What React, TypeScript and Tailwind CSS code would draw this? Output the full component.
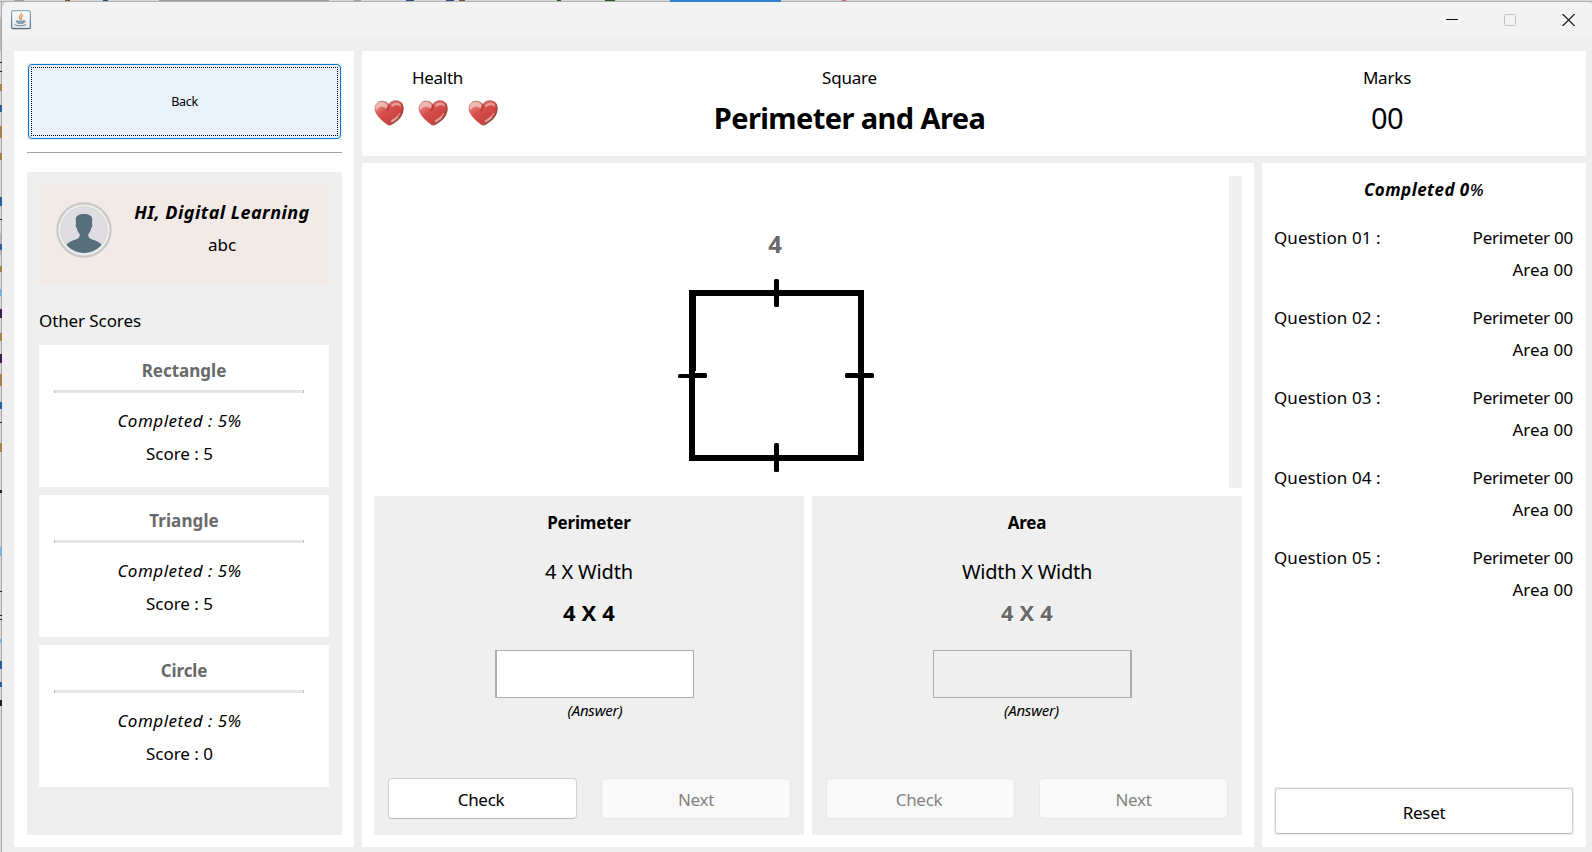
import type { ReactNode } from "react";

function cx(...parts: (string | undefined)[]) {
  return parts.filter(Boolean).join(" ");
}

/** A single line of text, centred in a row whose height the caller gives. */
function Line({ children, className }: { children: ReactNode; className?: string }) {
  return (
    <div className={cx("flex shrink-0 items-center pb-[2px] whitespace-pre leading-none", className)}>
      <span>{children}</span>
    </div>
  );
}

function JavaIcon() {
  return (
    <svg width="20" height="20" viewBox="0 0 20 20">
      <defs>
        <linearGradient id="jframe" x1="0" y1="0" x2="0" y2="1">
          <stop offset="0" stopColor="#8fa9bd" />
          <stop offset="1" stopColor="#4d6b82" />
        </linearGradient>
        <linearGradient id="jback" x1="0" y1="0" x2="0" y2="1">
          <stop offset="0" stopColor="#ffffff" />
          <stop offset="1" stopColor="#e3e6e8" />
        </linearGradient>
      </defs>
      <rect x="0.6" y="0.6" width="18.8" height="18" rx="1.6" fill="url(#jback)" stroke="url(#jframe)" strokeWidth="1.2" />
      <path d="M10.4 3.2c1 1.6-2.8 2.6-2.4 4.2.2.8 1.2 1.2 1.4 2.2M11.8 5.6c-1.6.8-2.4 1.600-1.600 2.600.5.6.3 1.200-.2 1.600" fill="none" stroke="#e2935a" strokeWidth="1.200" strokeLinecap="round" />
      <path d="M5.2 10.600c2 .8 6.200.7 8 0-.2 1.200-.6 2.200-1.400 2.800H6.800c-.8-.7-1.400-1.600-1.600-2.800z" fill="#8ba3b5" stroke="#6d889d" strokeWidth="0.700" />
      <path d="M13 10.800c2-.5 2.200 1.500-.6 2.100M4 14.800c2.200 1.500 8.400 1.300 10.600 0" fill="none" stroke="#6d889d" strokeWidth="1" strokeLinecap="round" />
    </svg>
  );
}

function Heart({ id }: { id: string }) {
  return (
    <svg width="30" height="26" viewBox="0 0 30 26" className="shrink-0">
      <defs>
        <linearGradient id={id} x1="0.1" y1="0" x2="0.9" y2="1">
          <stop offset="0" stopColor="#e3a09a" />
          <stop offset="0.4" stopColor="#d84f4c" />
          <stop offset="0.7" stopColor="#c94341" />
          <stop offset="1" stopColor="#a07060" />
        </linearGradient>
      </defs>
      <path
        d="M14.600 4.200C12.500.5 7 0 3.500 2.400.3 4.600-.2 9.200 1.600 12.700c2.400 4.600 7.200 8.400 12 12.400.8.600 2 .700 3 .1 5.400-2.700 9.900-6.200 12-11.200 1.600-4.200 1.600-9.300-1.600-12C23.200-.8 17 .1 14.600 4.200z"
        fill={`url(#${id})`}
      />
      <path d="M13.600 5C11.400 1.600 7 1.200 4 3.300 1.700 5 1.200 8.200 2.200 10.600 4.500 6.500 8 5.200 12.500 8.600z" fill="#f3cbc6" opacity="0.75" />
      <path d="M17 5.400c2.200-3 6.200-3.800 8.600-2 1.200.9 1.700 2.400 1.500 3.700-2.600-2.500-5.500-2.500-9-.1z" fill="#eebdb6" opacity="0.7" />
      <path d="M3.800 2.200C7 .3 12 .8 14.600 4.200 17 .4 22.500-.5 26.200 1.700" fill="none" stroke="#a08a72" strokeWidth="0.900" opacity="0.7" />
      <path d="M27.800 4c1.200 3.400 1 7.700-.6 10.400-2 4.300-6.300 7.500-11 9.900" fill="none" stroke="#85503f" strokeWidth="1.500" opacity="0.600" />
      <path d="M14.700 4.400c.8 2.700 0 4.600-2.200 6.400" fill="none" stroke="#a32a2c" strokeWidth="1.400" opacity="0.700" />
      <path d="M25.800 13.200c-2 3.400-5 5.700-8.800 7.700M24 16.800c-2 2.400-4.300 4-6.600 5.300" fill="none" stroke="#eab3aa" strokeWidth="1.100" opacity="0.850" />
    </svg>
  );
}

function Avatar() {
  return (
    <svg width="56" height="58" viewBox="0 0 56 58" className="shrink-0">
      <defs>
        <clipPath id="face">
          <circle cx="28" cy="29" r="23" />
        </clipPath>
      </defs>
      <circle cx="28" cy="29" r="26.600" fill="#ececea" stroke="#c8c8c6" strokeWidth="2.200" />
      <circle cx="28" cy="29" r="23" fill="#dfdde1" stroke="#cfcfcf" strokeWidth="0.800" />
      <g clipPath="url(#face)" fill="#576f7b">
        <path d="M19.800 17.800c0-3 3.400-4.800 8.200-4.800s8.200 1.800 8.200 4.800c.1 1.800 0 3.500-.3 5.200.8.300.5 3.200-.7 4-.5 2.800-1.600 4.800-3 6.200.2 2.500.6 3.800 2.800 4.900 4.600 1.600 8.900 3 11.300 6.400-2.400 4.800-9.600 7.600-18.300 7.600S11.400 49 9.700 44.500c2.400-3.400 6.700-4.800 11.300-6.400 2.200-1.100 2.600-2.400 2.800-4.900-1.400-1.400-2.500-3.400-3-6.200-1.200-.8-1.500-3.700-.7-4-.3-1.700-.4-3.400-.3-5.200z" />
      </g>
    </svg>
  );
}

function SquareFigure() {
  return (
    <svg width="196" height="193" viewBox="0 0 196 193" className="shrink-0">
      <path d="M11 11h175v171H11zM17 17v159h163V17z" fill="#000" fillRule="evenodd" shapeRendering="crispEdges" />
      <path d="M17 17h1v75h-1z" fill="#000" shapeRendering="crispEdges" />
      <g fill="#000">
        <rect x="96" y="0" width="5" height="28" rx="1.500" />
        <rect x="96" y="164" width="5" height="29" rx="1.500" />
        <rect x="0" y="95" width="17" height="4" rx="1.500" />
        <rect x="12" y="94" width="17" height="5" rx="1.500" />
        <rect x="167" y="94" width="29" height="5" rx="1.500" />
      </g>
    </svg>
  );
}

function ScoreCard({ name, nameClass, score }: { name: string; nameClass: string; score: number }) {
  return (
    <section className="flex h-[142px] shrink-0 flex-col bg-white pt-[14px]">
      <Line className={cx("h-6 justify-center text-[17px] font-bold text-[#696969]", nameClass)}>{name}</Line>
      <div className="mt-[7px] ml-[15px] h-[3px] w-[250px] shrink-0 border-x border-[#bcbcbc] bg-[#e6e6e6]" />
      <div className="mt-4 w-[281px] text-[17px]">
        <Line className="h-6 justify-center italic tracking-[0.5px]">Completed : 5%</Line>
        <Line className="mt-[9px] h-6 justify-center">{`Score : ${score}`}</Line>
      </div>
    </section>
  );
}

function PushButton({ label, disabled, className }: { label: string; disabled?: boolean; className?: string }) {
  return (
    <button
      disabled={disabled}
      className={cx(
        "flex items-center justify-center rounded-[4px] border pt-[2px] text-[17px] leading-none tracking-[-0.3px]",
        disabled
          ? "border-[#e7e7e7] bg-[#f9f9f9] text-[#838383]"
          : "border-[#d0d0d0] border-b-[#b8b8b8] bg-[#fdfdfd] text-black",
        className
      )}
    >
      <span>{label}</span>
    </button>
  );
}

function AnswerPanel({
  title,
  formula,
  formulaClass,
  active,
}: {
  title: string;
  formula: string;
  formulaClass: string;
  active: boolean;
}) {
  return (
    <section className="flex w-[430px] shrink-0 flex-col bg-[#efefef] pt-[15px]">
      <Line className="h-6 justify-center text-[17px] font-bold tracking-[-0.2px]">{title}</Line>
      <Line className={cx("mt-[24px] h-[26px] justify-center pt-[2px] text-[20px]", formulaClass)}>{formula}</Line>
      <Line
        className={cx(
          "mt-[14px] h-7 justify-center text-[22px] font-bold tracking-[0.1px]",
          active ? "text-black" : "text-[#696969] [text-shadow:1px_1px_0_#fff]"
        )}
      >
        4 X 4
      </Line>
      <input
        disabled={!active}
        className={cx(
          "mt-[23px] ml-[121px] h-12 w-[199px] shrink-0 border border-[#abadb3] outline-none",
          active ? "border-l-2 bg-white" : "border-r-2 bg-[#efefef]"
        )}
      />
      <Line
        className={cx(
          "mt-[3px] h-5 justify-center text-[15px] italic tracking-[-0.2px]",
          active ? "pl-[12px]" : "pl-[9px]"
        )}
      >
        (Answer)
      </Line>
      <div className="mt-[57px] flex gap-6 pl-[14px]">
        <PushButton label="Check" disabled={!active} className="h-[41px] w-[189px] pr-[3px]" />
        <PushButton label="Next" disabled className={cx("h-[41px]", active ? "w-[190px]" : "w-[189px]")} />
      </div>
    </section>
  );
}

function Sidebar() {
  return (
    <aside className="flex w-[340px] shrink-0 flex-col bg-white px-[12px] pt-[12px] pl-[13px]">
      <div className="h-[77px] shrink-0 bg-[#efefef] p-px">
        <button className="flex h-full w-full rounded-[4px] border border-[#0078d4] bg-[#e9f1fa] p-[2px]">
          <span className="flex h-full w-full items-center justify-center border border-dotted border-black pt-[2px] text-[12.5px] leading-none tracking-[-0.3px]">
            Back
          </span>
        </button>
      </div>
      <div className="mt-[12px] h-px shrink-0 bg-[#a0a0a0]" />
      <div className="mt-[19px] flex h-[663px] shrink-0 flex-col bg-[#efefef] px-[13px] pt-[13px] pl-[12px]">
        <div className="flex h-[100px] shrink-0 bg-[#f2eae6] pt-[16px] pl-[17px]">
          <Avatar />
          <div className="ml-[10px] flex w-[200px] flex-col">
            <Line className="h-6 justify-center text-[18px] font-bold italic tracking-[0.45px]">HI, Digital Learning</Line>
            <Line className="mt-[8px] h-6 justify-center text-[17px]">abc</Line>
          </div>
        </div>
        <Line className="mt-6 h-6 text-[17px] tracking-[-0.1px]">Other Scores</Line>
        <div className="mt-[12px] flex flex-col gap-2">
          <ScoreCard name="Rectangle" nameClass="tracking-[0px]" score={5} />
          <ScoreCard name="Triangle" nameClass="tracking-[0.1px]" score={5} />
          <ScoreCard name="Circle" nameClass="tracking-[-0.1px]" score={0} />
        </div>
      </div>
    </aside>
  );
}

function Header() {
  return (
    <header className="flex h-[105px] shrink-0 bg-white pt-[15px] pl-[12px]">
      <div className="w-[127px]">
        <Line className="h-6 justify-center text-[17px] tracking-[-0.3px]">Health</Line>
        <div className="mt-[10px] flex">
          <Heart id="heart-a" />
          <div className="ml-[14px]">
            <Heart id="heart-b" />
          </div>
          <div className="ml-5">
            <Heart id="heart-c" />
          </div>
        </div>
      </div>
      <div className="w-[697px]">
        <Line className="h-6 justify-center text-[17px] tracking-[-0.2px]">Square</Line>
        <Line className="mt-[10px] h-9 justify-center text-[29px] font-bold tracking-[-0.6px]">Perimeter and Area</Line>
      </div>
      <div className="w-[378px]">
        <Line className="h-6 justify-center text-[17px] tracking-[-0.2px]">Marks</Line>
        <Line className="mt-[10px] h-9 justify-center text-[29px] tracking-[-0.6px]">00</Line>
      </div>
    </header>
  );
}

function Workspace() {
  return (
    <main className="flex w-[892px] shrink-0 flex-col bg-white pt-[13px] pl-[12px]">
      <div className="flex h-[312px] shrink-0">
        <div className="w-[855px]">
          <Line className="mt-[57px] ml-[301px] h-6 w-[200px] justify-center text-[24px] font-bold text-[#696969]">4</Line>
          <div className="mt-[22px] ml-[304px]">
            <SquareFigure />
          </div>
        </div>
        <div className="w-[13px] bg-[#efefef]" />
      </div>
      <div className="mt-2 flex h-[339px] gap-2">
        <AnswerPanel title="Perimeter" formula="4 X Width" formulaClass="tracking-[-0.15px]" active />
        <AnswerPanel title="Area" formula="Width X Width" formulaClass="tracking-[-0.25px]" active={false} />
      </div>
    </main>
  );
}

function Results() {
  return (
    <aside className="flex w-[324px] shrink-0 flex-col bg-white px-[12px] pt-[15px]">
      <Line className="h-6 justify-center text-[17px] font-bold italic tracking-[0.45px]">
        Completed 0<span className="font-medium">%</span>
      </Line>
      <div className="mt-6 flex flex-col gap-6 text-[17px]">
        {["01", "02", "03", "04", "05"].map((n) => (
          <div key={n} className="flex flex-col gap-2 pr-px">
            <div className="flex justify-between">
              <Line className="h-6 tracking-[0.07px]">{`Question ${n} :`}</Line>
              <Line className="h-6 tracking-[-0.25px]">Perimeter 00</Line>
            </div>
            <Line className="h-6 justify-end">Area 00</Line>
          </div>
        ))}
      </div>
      <div className="mt-auto mb-[12px] flex h-12 bg-[#efefef] p-px">
        <PushButton label="Reset" className="w-full" />
      </div>
    </aside>
  );
}

function TitleBar() {
  return (
    <div className="flex h-[37px] shrink-0 justify-between bg-[#f3f3f3] pr-[17px] pl-[9px]">
      <div className="pt-[8px]">
        <JavaIcon />
      </div>
      <div className="flex gap-[46px] pt-[12px]">
        <svg width="12" height="12" viewBox="0 0 12 12">
          <path d="M0 5.500h12" stroke="#111" shapeRendering="crispEdges" />
        </svg>
        <svg width="12" height="12" viewBox="0 0 12 12">
          <rect x="0.500" y="0.500" width="11" height="11" rx="1" fill="none" stroke="#c3c3c3" />
        </svg>
        <svg width="13" height="12" viewBox="0 0 13 12">
          <path d="M.6 0l12 12M12.600 0L.6 12" stroke="#1a1a1a" strokeWidth="1.200" />
        </svg>
      </div>
    </div>
  );
}

/** Sliver of the desktop that stays visible along the left edge. */
function DesktopEdge() {
  return (
    <svg width="2" height="850" viewBox="0 0 2 850" className="shrink-0" shapeRendering="crispEdges">
      <path d="M0 0h1v850H0z" fill="#dadada" />
      <path d="M1 0h1v850H1z" fill="#a9a9a9" />
      <path d="M0 15h1v34H0zM0 231h1v22H0z" fill="#b8b8b8" />
      <path d="M0 60h2v1H0zM0 69h2v1H0zM0 217h2v1H0zM0 420h2v1H0zM0 488h2v3H0zM0 589h2v1H0zM0 613h2v1H0zM0 617h2v1H0zM0 698h2v6H0z" fill="#222" />
      <path d="M0 82h2v7H0zM0 124h2v12H0zM0 151h2v7H0zM0 264h2v6H0zM0 331h2v8H0zM0 372h2v12H0zM0 441h2v9H0z" fill="#a7834c" />
      <path d="M0 103h2v7H0zM0 195h2v9H0zM0 242h2v6H0zM0 400h2v7H0zM0 659h2v8H0zM0 680h2v5H0z" fill="#2c5f9e" />
      <path d="M0 287h2v7H0zM0 545h2v9H0zM0 637h2v4H0z" fill="#7db2d6" />
      <path d="M0 307h2v9H0zM0 352h2v9H0z" fill="#40204a" />
    </svg>
  );
}

/** Row of pixels from the windows behind, above the title bar. */
function DesktopTop() {
  return (
    <svg width="1592" height="2" viewBox="0 0 1592 2" className="block shrink-0" shapeRendering="crispEdges">
      <path d="M0 0h1592v1H0z" fill="#d8d8d8" />
      <path d="M0 1h1592v1H0z" fill="#b0b0b0" />
      <path d="M159 0h170v1H159zM14 0h10v1H14zM354 0h7v1h-7z" fill="#9d9d9d" />
      <path d="M406 0h8v1h-8zM446 0h8v1h-8zM103 0h5v1h-5z" fill="#294d73" />
      <path d="M459 0h6v1h-6zM65 0h5v1h-5z" fill="#7d4b24" />
      <path d="M557 0h4v1h-4zM605 0h10v1h-10z" fill="#2c5a24" />
      <path d="M670 0h111v2H670z" fill="#2f80cf" />
      <path d="M842 0h4v1h-4z" fill="#c75d8a" />
    </svg>
  );
}

export default function App() {
  return (
    <div className="h-[852px] w-[1592px] overflow-hidden bg-[#d6d6d6] font-['Noto_Sans','Open_Sans',sans-serif] text-black">
      <DesktopTop />
      <div className="flex h-[850px]">
        <DesktopEdge />
        <div className="flex w-[1590px] shrink-0 flex-col overflow-hidden rounded-tl-[7px] rounded-tr-[4px] bg-[#efefef]">
          <TitleBar />
          <div className="mt-[12px] ml-[12px] flex h-[796px] shrink-0 gap-2">
            <Sidebar />
            <div className="flex w-[1224px] shrink-0 flex-col gap-[7px]">
              <Header />
              <div className="flex h-[684px] gap-2">
                <Workspace />
                <Results />
              </div>
            </div>
          </div>
        </div>
      </div>
    </div>
  );
}
